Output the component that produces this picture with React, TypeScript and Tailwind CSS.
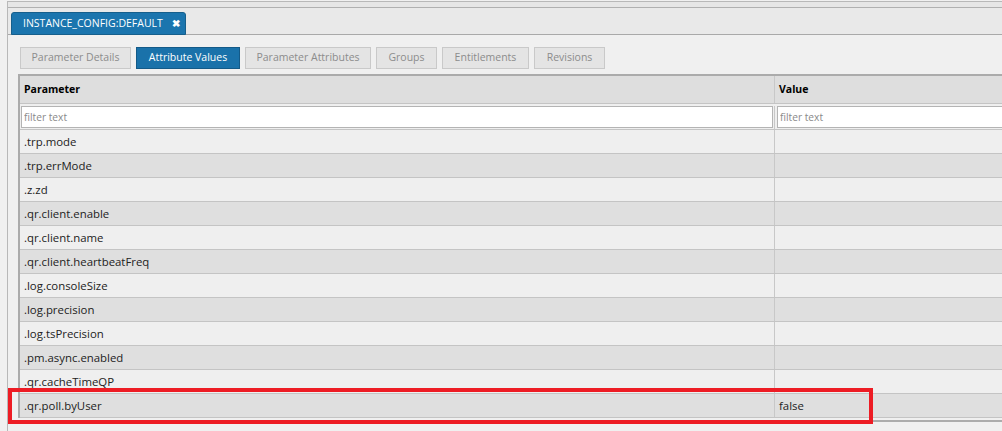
import React from "react";

const SUB_TABS = [
  { label: "Parameter Details", active: false, w: "w-[111px]" },
  { label: "Attribute Values", active: true, w: "w-[104px]" },
  { label: "Parameter Attributes", active: false, w: "w-[126px]" },
  { label: "Groups", active: false, w: "w-[61px]" },
  { label: "Entitlements", active: false, w: "w-[87px]" },
  { label: "Revisions", active: false, w: "w-[71px]" },
];

const ROWS: { name: string; value?: string }[] = [
  { name: ".trp.mode" },
  { name: ".trp.errMode" },
  { name: ".z.zd" },
  { name: ".qr.client.enable" },
  { name: ".qr.client.name" },
  { name: ".qr.client.heartbeatFreq" },
  { name: ".log.consoleSize" },
  { name: ".log.precision" },
  { name: ".log.tsPrecision" },
  { name: ".pm.async.enabled" },
  { name: ".qr.cacheTimeQP" },
  { name: ".qr.poll.byUser", value: "false" },
];

export default function App() {
  return (
    <div className="relative flex h-[431px] w-[1002px] overflow-hidden bg-[#f0f0f0] font-['Open_Sans',sans-serif] text-[11px] text-[#222]">
      <div className="w-[7px] shrink-0" />

      {/* Main panel */}
      <div className="mt-px flex min-w-0 flex-1 flex-col border-l border-t border-[#b8b8b8]">
        <div className="h-[6px] border-b border-[#b0b0b0] bg-[#e6e6e6]" />

        {/* Document tab strip */}
        <div className="flex h-[27px] items-start border-b border-[#a9a9a9] bg-[#e9e9e9] pl-[3px] pt-[4px]">
          <div className="flex h-[23px] items-center gap-[9px] rounded-t-[3px] border border-[#165f8c] bg-[#1b75ae] pl-[11px] pr-[5px] text-[10.5px] text-white">
            <span>INSTANCE_CONFIG:DEFAULT</span>
            <span className="text-[10px] font-bold">✖</span>
          </div>
        </div>

        {/* Sub tabs */}
        <div className="flex gap-[5px] pl-[12px] pt-[12px] text-[10.5px]">
          {SUB_TABS.map((t) =>
            t.active ? (
              <button
                key={t.label}
                className={`${t.w} h-[22px] border border-[#135a88] bg-[#1a72aa] text-white`}
              >
                {t.label}
              </button>
            ) : (
              <button
                key={t.label}
                className={`${t.w} h-[22px] border border-[#c9c9c9] bg-[#e4e4e4] text-[#8c8c8c]`}
              >
                {t.label}
              </button>
            ),
          )}
        </div>

        {/* Grid (runs past the right edge of the window) */}
        <div className="-mr-[40px] ml-[10px] mt-[5px] border-l-2 border-t-2 border-[#ababab] text-[11.4px]">
          <div className="flex h-[28px] border-b border-[#c4c4c4] bg-[#dedede] text-[10.5px] font-bold text-black">
            <div className="flex w-[755px] items-center border-r border-[#c8c8c8] pl-[4px]">Parameter</div>
            <div className="flex flex-1 items-center pl-[4px]">Value</div>
          </div>
          <div className="flex h-[26px] border-b border-[#c4c4c4] bg-[#efefef] pt-[2px]">
            <div className="w-[755px] border-r border-[#c8c8c8] pl-px pr-px">
              <input
                placeholder="filter text"
                className="h-[22px] w-full border border-[#b4b4b4] bg-white px-[2px] text-[10.2px] outline-none placeholder:text-[#8a8a8a]"
              />
            </div>
            <div className="flex-1 pl-[2px]">
              <input
                placeholder="filter text"
                className="h-[22px] w-full border border-[#b4b4b4] bg-white px-[2px] text-[10.2px] outline-none placeholder:text-[#8a8a8a]"
              />
            </div>
          </div>
          {ROWS.map((r, i) => (
            <div
              key={r.name}
              className={`flex h-[24px] border-b border-[#c4c4c4] ${i % 2 === 0 ? "bg-[#efefef]" : "bg-[#dfdfdf]"}`}
            >
              <div className="flex w-[755px] items-center border-r border-[#c8c8c8] pl-[4px]">{r.name}</div>
              <div className="flex flex-1 items-center pl-[4px]">{r.value}</div>
            </div>
          ))}
        </div>
        <div className="-mr-[40px] ml-[10px] mt-[2px] h-[2px] bg-[#acacac]" />
      </div>

      {/* Annotation */}
      <div className="absolute left-[8px] top-[388px] h-[36px] w-[865px] border-4 border-[#ed1c24]" />
    </div>
  );
}
